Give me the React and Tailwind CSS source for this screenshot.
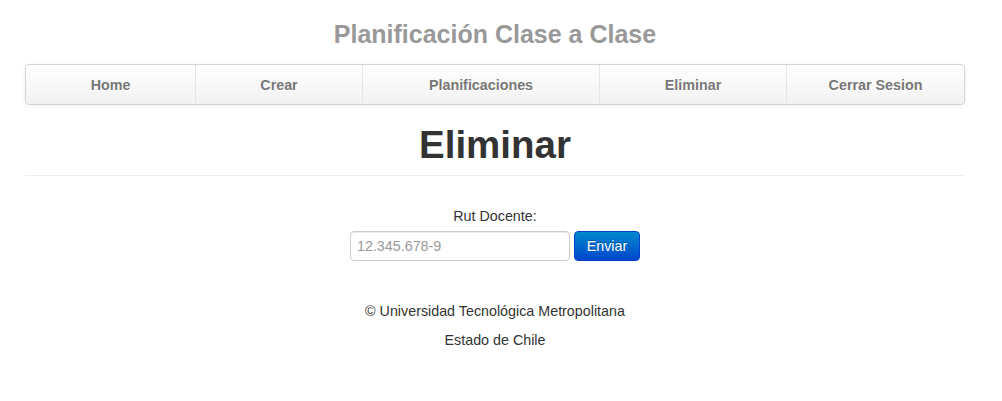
const navItems = [
  { label: "Home", w: "w-[169px]" },
  { label: "Crear", w: "w-[167px]" },
  { label: "Planificaciones", w: "w-[237px]" },
  { label: "Eliminar", w: "w-[187px]" },
  { label: "Cerrar Sesion", w: "flex-1" },
];

const App = () => {
  return (
    <div className="min-h-[401px] bg-white font-['Liberation_Sans',Arial,sans-serif] text-[14.3px] leading-[20px] text-[#333]">
      <div className="w-[940px] ml-[25px] pt-[14px]">
        {/* Título */}
        <h3 className="text-center text-[25px] leading-[40px] font-bold text-[#999] mb-[10px]">
          Planificación Clase a Clase
        </h3>

        {/* Navegación */}
        <div className="flex h-[41px] rounded-[4px] border border-[#d4d4d4] bg-gradient-to-b from-white to-[#f2f2f2] shadow-[0_1px_4px_rgba(0,0,0,0.065)] overflow-hidden">
          {navItems.map((item, i) => (
            <a
              key={item.label}
              className={`${item.w} flex items-center justify-center font-bold text-[#777] [text-shadow:0_1px_0_#fff] ${
                i > 0 ? "border-l border-[#e5e5e5]" : ""
              }`}
            >
              {item.label}
            </a>
          ))}
        </div>

        {/* Encabezado */}
        <div className="mt-[20px] pb-[10px] border-b border-[#eee]">
          <h1 className="text-center text-[38.5px] leading-[40px] font-bold text-[#333]">
            Eliminar
          </h1>
        </div>

        {/* Formulario */}
        <div className="flex flex-col items-center mt-[30px]">
          <label className="mb-[5px]">Rut Docente:</label>
          <div className="flex gap-[4px]">
            <input
              placeholder="12.345.678-9"
              className="w-[220px] h-[30px] px-[6px] rounded-[4px] border border-[#ccc] shadow-[inset_0_1px_1px_rgba(0,0,0,0.075)] text-[14.3px] text-[#555] placeholder:text-[#999] outline-none"
            />
            <button className="w-[66px] h-[30px] rounded-[4px] border border-[#0044cc] bg-gradient-to-b from-[#0088cc] to-[#0044cc] text-white text-[14.3px] [text-shadow:0_-1px_0_rgba(0,0,0,0.25)]">
              Enviar
            </button>
          </div>
        </div>

        {/* Footer */}
        <div className="text-center mt-[40px]">
          <p className="mb-[9px]">© Universidad Tecnológica Metropolitana</p>
          <p>Estado de Chile</p>
        </div>
      </div>
    </div>
  );
};

export default App;
